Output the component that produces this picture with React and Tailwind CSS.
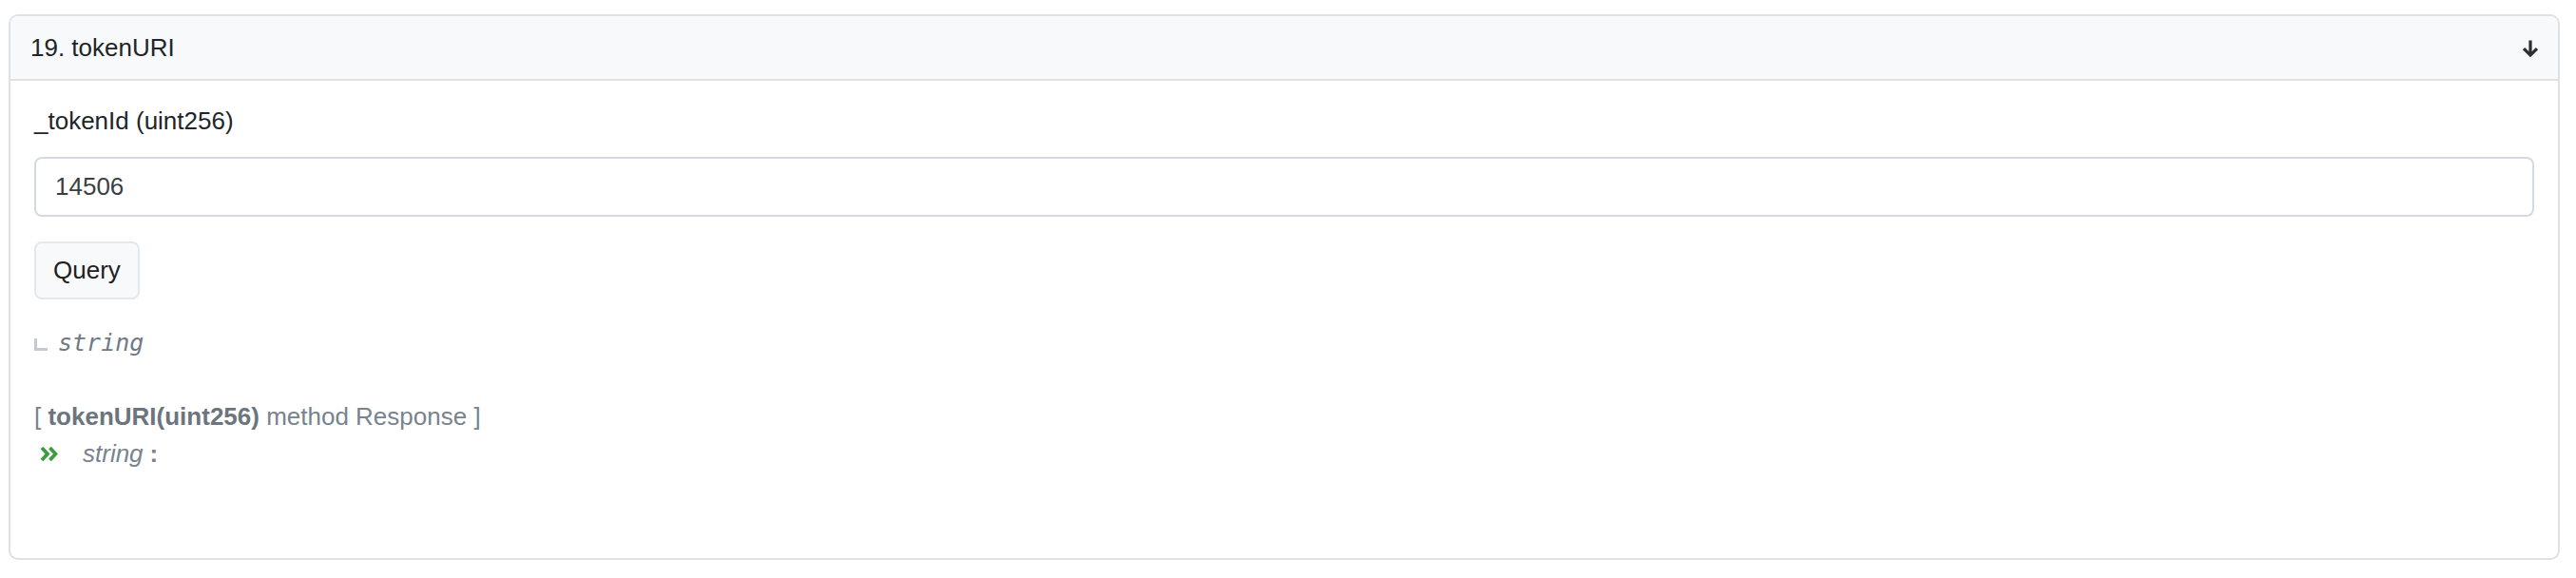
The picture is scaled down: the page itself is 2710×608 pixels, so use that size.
import React from "react";

function ArrowDown() {
  return (
    <svg width="18" height="19" viewBox="0 0 18 19" fill="none">
      <path d="M9 1.5V17" stroke="#2b2f33" strokeWidth="3.2" />
      <path d="M2 10.2L9 17L16 10.2" stroke="#2b2f33" strokeWidth="3.2" strokeLinejoin="miter" />
    </svg>
  );
}

function DoubleChevron() {
  return (
    <svg width="19" height="17" viewBox="0 0 19 17" fill="none">
      <path d="M2 2L8 8.5L2 15" stroke="#3d9c40" strokeWidth="3.8" />
      <path d="M10.5 2L16.5 8.5L10.5 15" stroke="#3d9c40" strokeWidth="3.8" />
    </svg>
  );
}

export default function App() {
  return (
    <div className="w-[2710px] h-[608px] bg-white pt-[15px] pl-[9px] font-['Liberation_Sans',Arial,sans-serif] text-[26px] leading-[39px]">
      <div className="w-[2684px] h-[574px] border-2 border-[#dfe1e5] rounded-[10px] overflow-hidden">
        {/* header */}
        <div className="h-[68px] bg-[#f8f9fa] border-b-2 border-[#dfe1e5] flex items-center justify-between pl-[21px] pr-[20px]">
          <span className="text-[#212529]">19. tokenURI</span>
          <ArrowDown />
        </div>

        {/* body */}
        <div className="pt-[23px] px-[25px]">
          <div className="text-[#212529]">_tokenId (uint256)</div>
          <div className="mt-[18px] h-[63px] border-2 border-[#d5dae2] rounded-[8px] flex items-center pl-[20px] text-[#3a3f45]">
            14506
          </div>
          <button className="mt-[26px] h-[61px] px-[18px] bg-[#f8f9fa] border-2 border-[#e4e7ec] rounded-[8px] text-[#1e2022]">
            Query
          </button>

          <div className="mt-[26px] flex items-center h-[39px]">
            <span className="w-[14px] h-[13px] border-l-[3px] border-b-[3px] border-[#c3c9d2] mt-[4px]"></span>
            <span className="ml-[11px] italic text-[25px] text-[#6f7a86] font-['DejaVu_Sans_Mono','Liberation_Mono',monospace]">
              string
            </span>
          </div>

          <div className="mt-[39px] text-[#77838f]">
            [ <b className="font-bold text-[#6c757d]">tokenURI(uint256)</b> method Response ]
          </div>
          <div className="flex items-center text-[#77838f]">
            <span className="ml-[6px] mr-[26px] flex items-center">
              <DoubleChevron />
            </span>
            <i>string</i>
            <b className="ml-[7px] font-bold">:</b>
          </div>
        </div>
      </div>
    </div>
  );
}
